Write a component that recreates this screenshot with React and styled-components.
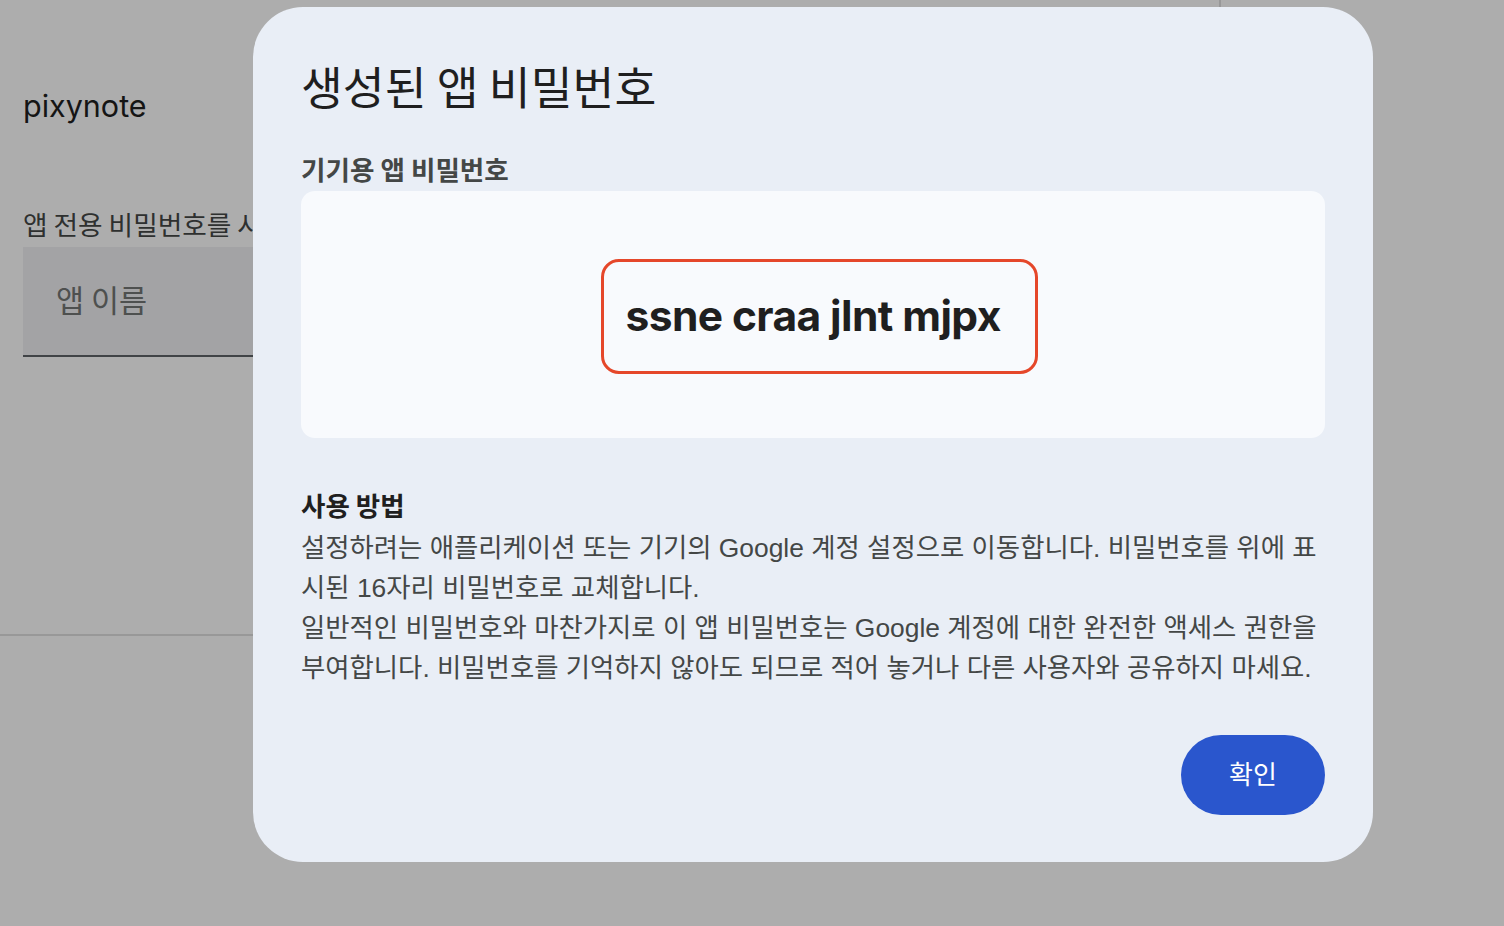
import React from "react";
import styled, { createGlobalStyle } from "styled-components";

const GlobalStyle = createGlobalStyle`
  html, body {
    margin: 0;
    padding: 0;
    background: #ffffff;
    font-family: "Liberation Sans", "Noto Sans CJK KR", sans-serif;
    overflow: hidden;
  }
`;

const Page = styled.div`
  width: 1504px;
  height: 926px;
  position: relative;
`;

const Panel = styled.section`
  width: 1196px;
  height: 634px;
  padding: 0 0 0 23px;
  border-right: 2px solid #e1e1e1;
  border-bottom: 2px solid #e1e1e1;
  display: flex;
  flex-direction: column;
`;

const AppName = styled.h2`
  margin: 86px 0 0;
  font-family: "Inter", "Roboto", sans-serif;
  font-weight: 400;
  font-size: 30.5px;
  line-height: 40px;
  color: #1f1f1f;
`;

const FieldLabel = styled.p`
  margin: 81px 0 0;
  font-family: "Noto Sans CJK KR", sans-serif;
  font-size: 26.7px;
  line-height: 34px;
  color: #444746;
  white-space: nowrap;
`;

const Field = styled.div`
  margin-top: 6px;
  width: 640px;
  height: 110px;
  background: #f0f1f4;
  border-bottom: 2px solid #5f6368;
  display: flex;
  align-items: center;
  padding-left: 33px;
  box-sizing: border-box;
`;

const Placeholder = styled.span`
  font-family: "Noto Sans CJK KR", sans-serif;
  font-size: 30.5px;
  color: #747775;
  margin-top: -4px;
`;

const Scrim = styled.div`
  position: absolute;
  inset: 0;
  background: rgba(0, 0, 0, 0.32);
  display: flex;
  align-items: flex-start;
  padding: 7px 0 0 253px;
`;

const Dialog = styled.div`
  width: 1120px;
  height: 855px;
  box-sizing: border-box;
  background: #e9eef6;
  border-radius: 50px;
  padding: 48px 48px 47px;
  display: flex;
  flex-direction: column;
`;

const Title = styled.h1`
  margin: 0;
  font-family: "Noto Sans CJK KR", sans-serif;
  font-weight: 400;
  font-size: 45.5px;
  line-height: 60px;
  color: #1f1f1f;
`;

const SubTitle = styled.h3`
  margin: 37px 0 0;
  font-family: "Noto Sans CJK KR", sans-serif;
  font-weight: 700;
  font-size: 26.6px;
  line-height: 34px;
  color: #444746;
`;

const CodeBox = styled.div`
  margin-top: 5px;
  height: 247px;
  box-sizing: border-box;
  background: #f8fafd;
  border-radius: 14px;
  display: flex;
  align-items: center;
  justify-content: center;
  padding: 4px 0 0 12px;
`;

const CodeMark = styled.div`
  box-sizing: border-box;
  width: 437px;
  height: 115px;
  border: 3px solid #e5472a;
  border-radius: 18px;
  display: flex;
  align-items: center;
  padding: 0 0 0 22px;
`;

const Code = styled.span`
  font-family: "Inter", "Roboto", sans-serif;
  font-weight: 700;
  font-size: 42.5px;
  letter-spacing: -0.6px;
  color: #1f1f1f;
  margin-top: -2px;
`;

const Section = styled.div`
  margin-top: 47px;
  font-family: "Liberation Sans", "Noto Sans CJK KR", sans-serif;
  color: #444746;
`;

const SectionHead = styled.h4`
  margin: 0 0 3px;
  font-family: "Noto Sans CJK KR", sans-serif;
  font-weight: 700;
  font-size: 26.5px;
  line-height: 40px;
  color: #1f1f1f;
`;

const Body = styled.p`
  margin: 0;
  font-size: 26.4px;
  line-height: 40px;
`;

const Actions = styled.div`
  margin-top: auto;
  display: flex;
  justify-content: flex-end;
`;

const Button = styled.button`
  width: 144px;
  height: 80px;
  border: none;
  border-radius: 40px;
  background: #2a56cd;
  color: #ffffff;
  font-family: "Noto Sans CJK KR", sans-serif;
  font-size: 26px;
  padding: 0 0 5px;
  cursor: pointer;
`;

export default function App() {
  return (
    <Page>
      <GlobalStyle />
      <Panel>
        <AppName>pixynote</AppName>
        <FieldLabel>앱 전용 비밀번호를 사용할 앱의 이름을 입력하세요.</FieldLabel>
        <Field>
          <Placeholder>앱 이름</Placeholder>
        </Field>
      </Panel>
      <Scrim>
        <Dialog role="dialog">
          <Title>생성된 앱 비밀번호</Title>
          <SubTitle>기기용 앱 비밀번호</SubTitle>
          <CodeBox>
            <CodeMark>
              <Code>ssne craa jlnt mjpx</Code>
            </CodeMark>
          </CodeBox>
          <Section>
            <SectionHead>사용 방법</SectionHead>
            <Body>
              설정하려는 애플리케이션 또는 기기의 Google 계정 설정으로 이동합니다. 비밀번호를 위에 표시된 16자리 비밀번호로 교체합니다.
            </Body>
            <Body>
              일반적인 비밀번호와 마찬가지로 이 앱 비밀번호는 Google 계정에 대한 완전한 액세스 권한을 부여합니다. 비밀번호를 기억하지 않아도 되므로 적어 놓거나 다른 사용자와 공유하지 마세요.
            </Body>
          </Section>
          <Actions>
            <Button>확인</Button>
          </Actions>
        </Dialog>
      </Scrim>
    </Page>
  );
}
